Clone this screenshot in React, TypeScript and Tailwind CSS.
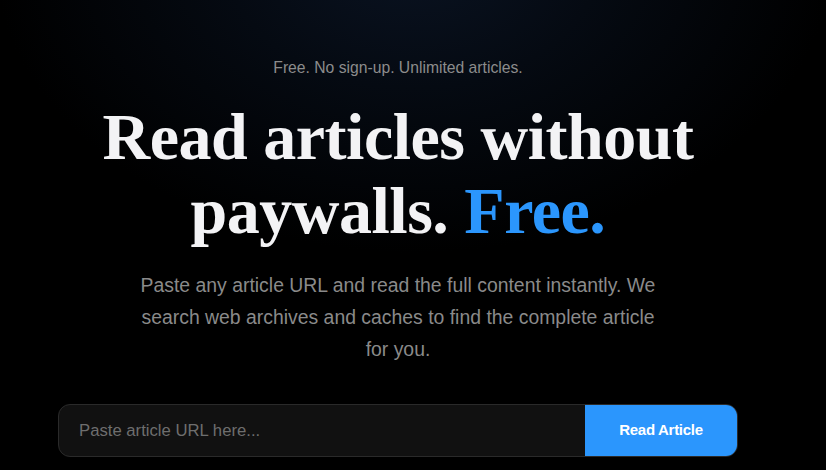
export default function App() {
  return (
    <div className="relative h-[470px] w-full overflow-hidden bg-black font-['Liberation_Sans',Arial,sans-serif]">
      <div className="pointer-events-none absolute inset-0 bg-[radial-gradient(ellipse_420px_300px_at_50%_-10%,#0a1322_0%,#050a12_45%,#000000_100%)]" />
      <div className="relative flex flex-col items-center pr-[30px] pt-[59px]">
        <p className="text-[15.7px] leading-[18px] text-[#8c8c8c]">Free. No sign-up. Unlimited articles.</p>
        <h1 className="mt-[23px] text-center font-['Liberation_Serif','DejaVu_Serif',serif] text-[66px] font-bold leading-[74px] tracking-[-0.5px] text-[#f3f3f5]">
          Read articles without
          <br />
          paywalls. <span className="text-[#2b96fd]">Free.</span>
        </h1>
        <p className="mt-[21px] w-[530px] text-center text-[19.4px] leading-[32px] text-[#8a8a8a]">
          Paste any article URL and read the full content instantly. We search web archives and caches to find the complete article for you.
        </p>
        <div className="mt-[39px] flex h-[53px] w-[680px] overflow-hidden rounded-[12px] border border-[#2a2a2a] bg-[#111111]">
          <input
            className="flex-1 bg-transparent pl-[20px] text-[16.7px] text-white outline-none placeholder:text-[#6e6e6e]"
            placeholder="Paste article URL here..."
          />
          <button className="w-[152px] bg-[#2b96fd] text-[15px] font-bold tracking-[-0.3px] text-white">Read Article</button>
        </div>
      </div>
    </div>
  );
}
